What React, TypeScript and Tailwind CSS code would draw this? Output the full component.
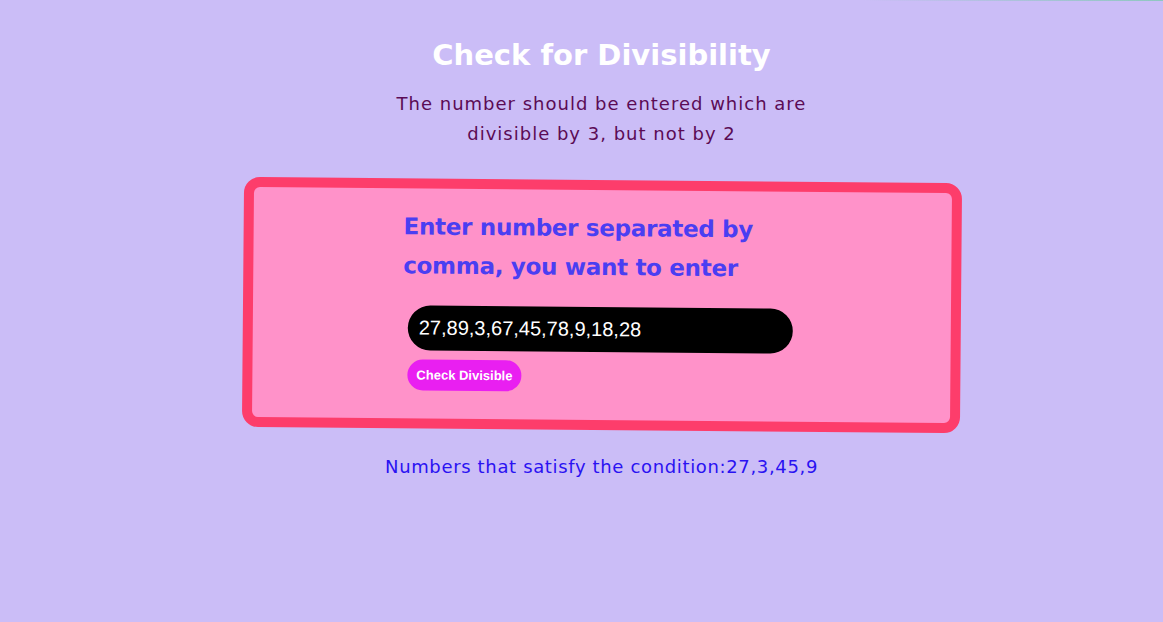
import React, { useState } from 'react';

const App: React.FC = () => {
  const [value, setValue] = useState('27,89,3,67,45,78,9,18,28');
  const [result, setResult] = useState('27,3,45,9');

  const checkDivisible = () => {
    const nums = value
      .split(',')
      .map((n) => parseInt(n.trim()))
      .filter((n) => !isNaN(n) && n % 3 === 0 && n % 2 !== 0);
    setResult(nums.join(','));
  };

  return (
    <div className="relative min-h-screen w-full bg-[#cbbdf7] font-['DejaVu_Sans',sans-serif] flex flex-col items-center pt-[36px] pl-[40px]">
      {/* thin line at top right edge */}
      <div className="absolute top-0 right-0 w-[300px] h-[1px] bg-gradient-to-r from-transparent to-[#8fc7c0]" />

      <h1 className="text-[29px] font-bold text-white leading-[38px]">Check for Divisibility</h1>
      <p className="mt-[15px] w-[430px] text-center text-[18px] leading-[30px] tracking-[1px] text-[#5b0b55]">
        The number should be entered which are divisible by 3, but not by 2
      </p>

      {/* Card */}
      <div className="mt-[31px] w-[718px] h-[250px] rotate-[0.5deg] rounded-[16px] border-[10px] border-[#fd3d6b] bg-[#ff92c9] flex justify-center">
        <div className="w-[398px] pt-[19px]">
          <h2 className="text-[23px] font-bold text-[#4a3ef2] leading-[39px] tracking-[-0.3px]">
            Enter number separated by comma, you want to enter
          </h2>
          <input
            type="text"
            value={value}
            onChange={(e) => setValue(e.target.value)}
            className="mt-[20px] ml-[5px] block w-[385px] h-[45px] rounded-full bg-black px-[11px] text-[20px] text-white font-['Liberation_Sans',sans-serif] outline-none"
          />
          <button
            onClick={checkDivisible}
            className="mt-[9px] ml-[5px] h-[31px] px-[9px] rounded-full bg-[#e91ff1] text-white text-[13px] font-bold font-['Liberation_Sans',sans-serif]"
          >
            Check Divisible
          </button>
        </div>
      </div>

      <p className="mt-[22px] text-[18px] leading-[30px] tracking-[0.65px] text-[#2a12f2]">
        Numbers that satisfy the condition:{result}
      </p>
    </div>
  );
};

export default App;
